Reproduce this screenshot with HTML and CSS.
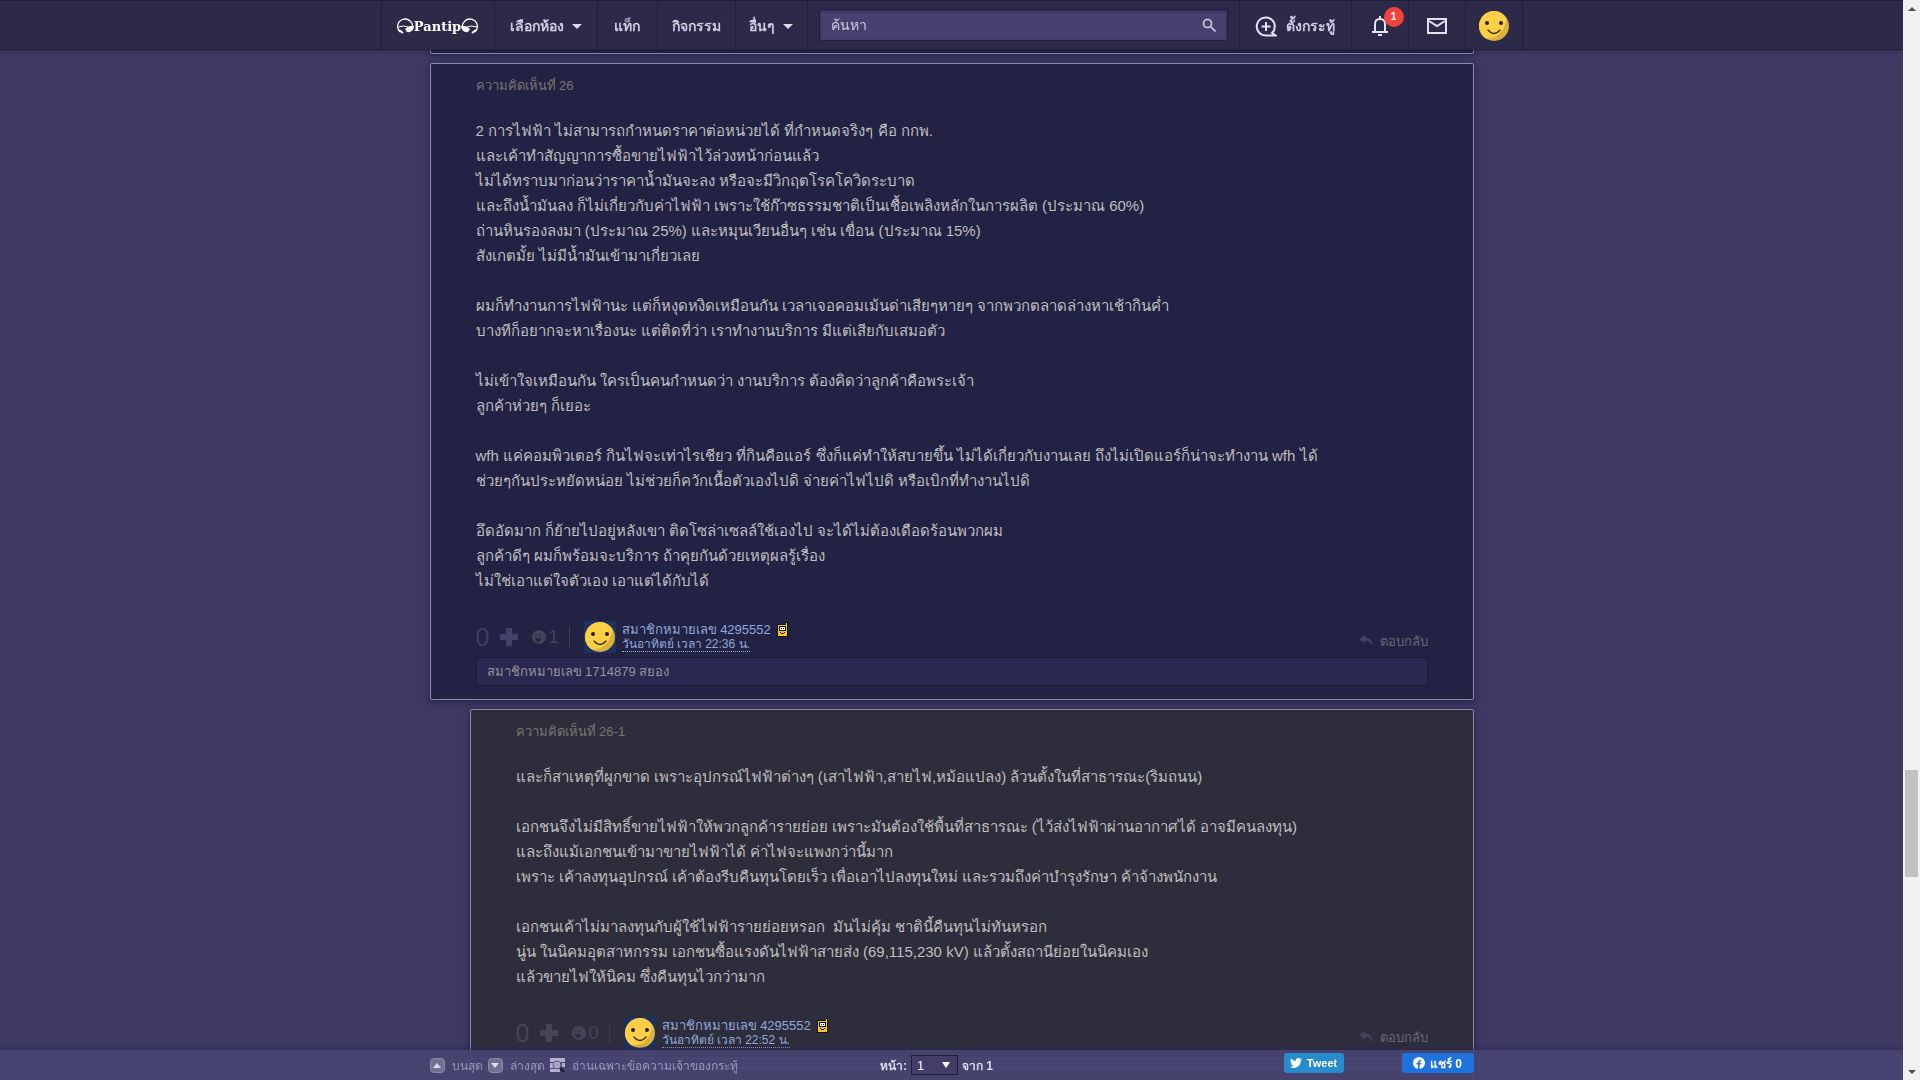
FILE: index.html
```html
<!DOCTYPE html>
<html lang="th">
<head>
  <meta charset="UTF-8">
  <meta name="viewport" content="width=device-width, initial-scale=1.0">
  <title>Pantip</title>
  <link rel="stylesheet" href="styles.css">
</head>
<body>
  <svg class="sprites" aria-hidden="true">
    <symbol id="face" viewBox="0 0 32 32">
      <circle cx="16" cy="16" r="15" fill="#dcb03c"/>
      <path d="M16 1a15 15 0 0 0-9 27c12 2 21-8 21-20A15 15 0 0 0 16 1z" fill="#ffd047"/>
      <ellipse cx="9" cy="13" rx="2" ry="2" fill="#252015"/>
      <ellipse cx="23" cy="13" rx="2" ry="2" fill="#252015"/>
      <path d="M10 20q6 7 12 0" fill="none" stroke="#4a3912" stroke-width="1.4" stroke-linecap="round"/>
    </symbol>
    <symbol id="emotion" viewBox="0 0 14 14">
      <circle cx="7" cy="7" r="7" fill="currentColor"/>
      <path d="M4 4v2M8 4v2" stroke="#242343" stroke-width="1"/>
      <path d="M3 8q3 1 6 0 0 4-3 4-2 0-3-4z" fill="#242343"/>
    </symbol>
    <symbol id="plus" viewBox="0 0 18 18">
      <path d="M6 0h6v6h6v6h-6v6H6v-6H0V6h6z" fill="currentColor"/>
    </symbol>
    <symbol id="reply" viewBox="0 0 14 12">
      <path d="M0 4l6-4v2.500c5 0 8 4 8 9C12 7.500 10 6 6 6v2.500z" fill="currentColor"/>
    </symbol>
    <symbol id="phone" viewBox="0 0 12 16">
      <path d="M0 2h9V0h2v15H0z" fill="#15100a"/>
      <path d="M1 3h9v11H1z" fill="#f6c81c"/>
      <path d="M9 1h1v3H9z" fill="#f6e81c"/>
      <path d="M2 4h7v5H2z" fill="#15100a"/>
      <path d="M3 5h5v3H3z" fill="#fff"/>
      <path d="M4 6h1v1H4zM6 6h1v1H6zM3 10h1v1H3zM7 10h1v1H7zM4 11h3v1H4z" fill="#15100a"/>
    </symbol>
  </svg>

  <header class="topbar">
    <nav class="topbar-inner">
      <a class="logo" href="#">
        <svg width="17" height="17" viewBox="0 0 17 17" fill="none" stroke="#fff">
          <path d="M3 14A7.500 7.500 0 1 1 15.500 10" stroke-width="1.300"/>
          <path d="M1 9q6-2 10 0" stroke-width="1"/>
          <path d="M8 11q4-4 9-3-1 7-7 6z" fill="#fff" stroke="none"/>
          <path d="M2 12l4 3" stroke-width="2"/>
        </svg>
        <span>Pantip</span>
        <svg width="17" height="17" viewBox="0 0 17 17" fill="none" stroke="#fff">
          <path d="M1.500 10A7.500 7.500 0 1 1 14 14" stroke-width="1.300"/>
          <path d="M6 9q4-2 10 0" stroke-width="1"/>
          <path d="M0 8q5-1 9 3l-2 3q-6 1-7-6z" fill="#fff" stroke="none"/>
          <path d="M11 15l4-3" stroke-width="2"/>
        </svg>
      </a>
      <a class="nav-item nav-rooms" href="#">เลือกห้อง <i class="caret"></i></a>
      <a class="nav-item nav-tags" href="#">แท็ก</a>
      <a class="nav-item nav-activity" href="#">กิจกรรม</a>
      <a class="nav-item nav-more" href="#">อื่นๆ <i class="caret"></i></a>
      <form class="search">
        <input type="text" placeholder="ค้นหา" aria-label="ค้นหา">
        <button type="submit" aria-label="ค้นหา">
          <svg width="14" height="14" viewBox="0 0 14 14" fill="none" stroke="#d3cfe3" stroke-width="1.600">
            <circle cx="5.500" cy="5.500" r="4"/><path d="M8.500 8.500l5 5"/>
          </svg>
        </button>
      </form>
      <a class="nav-item nav-post" href="#">
        <svg width="22" height="22" viewBox="0 0 22 22" fill="none" stroke="#e4e1f0" stroke-width="2">
          <path d="M17 18a9 9 0 1 0-6 2.500h9.500z"/><path d="M11 7v9M6.500 11.500h9"/>
        </svg>
        ตั้งกระทู้
      </a>
      <a class="nav-item nav-icon nav-bell" href="#" aria-label="แจ้งเตือน">
        <svg width="18" height="20" viewBox="0 0 18 20" fill="none" stroke="#e4e1f0" stroke-width="2">
          <path d="M1 16h16M4 15V8q0-5 5-5t5 5v7"/><path d="M9 0v3M7 19h4"/>
        </svg>
        <span class="badge">1</span>
      </a>
      <a class="nav-item nav-icon" href="#" aria-label="ข้อความ">
        <svg width="20" height="16" viewBox="0 0 20 16" fill="none" stroke="#e4e1f0" stroke-width="2">
          <path d="M1 1h18v14H1zM2 3l8 5 8-5"/>
        </svg>
      </a>
      <a class="nav-item nav-icon" href="#" aria-label="โปรไฟล์">
        <svg width="32" height="32"><use href="#face"/></svg>
      </a>
    </nav>
  </header>

  <main class="thread">
    <article class="comment comment-prev"></article>

    <article class="comment">
      <h2 class="comment-no">ความคิดเห็นที่ 26</h2>
      <div class="comment-text">2 การไฟฟ้า ไม่สามารถกำหนดราคาต่อหน่วยได้ ที่กำหนดจริงๆ คือ กกพ.<br>
        และเค้าทำสัญญาการซื้อขายไฟฟ้าไว้ล่วงหน้าก่อนแล้ว<br>
        ไม่ได้ทราบมาก่อนว่าราคาน้ำมันจะลง หรือจะมีวิกฤตโรคโควิดระบาด<br>
        และถึงน้ำมันลง ก็ไม่เกี่ยวกับค่าไฟฟ้า เพราะใช้ก๊าซธรรมชาติเป็นเชื้อเพลิงหลักในการผลิต (ประมาณ 60%)<br>
        ถ่านหินรองลงมา (ประมาณ 25%) และหมุนเวียนอื่นๆ เช่น เขื่อน (ประมาณ 15%)<br>
        สังเกตมั้ย ไม่มีน้ำมันเข้ามาเกี่ยวเลย<br>
        <br>
        ผมก็ทำงานการไฟฟ้านะ แต่ก็หงุดหงิดเหมือนกัน เวลาเจอคอมเม้นด่าเสียๆหายๆ จากพวกตลาดล่างหาเช้ากินค่ำ<br>
        บางทีก็อยากจะหาเรื่องนะ แต่ติดที่ว่า เราทำงานบริการ มีแต่เสียกับเสมอตัว<br>
        <br>
        ไม่เข้าใจเหมือนกัน ใครเป็นคนกำหนดว่า งานบริการ ต้องคิดว่าลูกค้าคือพระเจ้า<br>
        ลูกค้าห่วยๆ ก็เยอะ<br>
        <br>
        wfh แค่คอมพิวเตอร์ กินไฟจะเท่าไรเชียว ที่กินคือแอร์ ซึ่งก็แค่ทำให้สบายขึ้น ไม่ได้เกี่ยวกับงานเลย ถึงไม่เปิดแอร์ก็น่าจะทำงาน wfh ได้<br>
        ช่วยๆกันประหยัดหน่อย ไม่ช่วยก็ควักเนื้อตัวเองไปดิ จ่ายค่าไฟไปดิ หรือเบิกที่ทำงานไปดิ<br>
        <br>
        อึดอัดมาก ก็ย้ายไปอยู่หลังเขา ติดโซล่าเซลล์ใช้เองไป จะได้ไม่ต้องเดือดร้อนพวกผม<br>
        ลูกค้าดีๆ ผมก็พร้อมจะบริการ ถ้าคุยกันด้วยเหตุผลรู้เรื่อง<br>
        ไม่ใช่เอาแต่ใจตัวเอง เอาแต่ได้กับได้</div>
      <div class="comment-foot">
        <span class="score">0</span>
        <button class="vote" aria-label="โหวต"><svg width="18" height="18"><use href="#plus"/></svg></button>
        <button class="emotion"><svg width="14" height="14"><use href="#emotion"/></svg>1</button>
        <svg class="avatar" width="32" height="32"><use href="#face"/></svg>
        <div class="author">
          <a class="author-name" href="#">สมาชิกหมายเลข 4295552</a>
          <svg class="mobile" width="12" height="16"><use href="#phone"/></svg>
          <a class="author-time" href="#">วันอาทิตย์ เวลา 22:36 น.</a>
        </div>
        <a class="reply" href="#"><svg width="14" height="12"><use href="#reply"/></svg>ตอบกลับ</a>
      </div>
      <p class="reacted">สมาชิกหมายเลข 1714879 สยอง</p>
    </article>

    <article class="comment comment-sub">
      <h2 class="comment-no">ความคิดเห็นที่ 26-1</h2>
      <div class="comment-text">และก็สาเหตุที่ผูกขาด เพราะอุปกรณ์ไฟฟ้าต่างๆ (เสาไฟฟ้า,สายไฟ,หม้อแปลง) ล้วนตั้งในที่สาธารณะ(ริมถนน)<br>
        <br>
        เอกชนจึงไม่มีสิทธิ์ขายไฟฟ้าให้พวกลูกค้ารายย่อย เพราะมันต้องใช้พื้นที่สาธารณะ (ไว้ส่งไฟฟ้าผ่านอากาศได้ อาจมีคนลงทุน)<br>
        และถึงแม้เอกชนเข้ามาขายไฟฟ้าได้ ค่าไฟจะแพงกว่านี้มาก<br>
        เพราะ เค้าลงทุนอุปกรณ์ เค้าต้องรีบคืนทุนโดยเร็ว เพื่อเอาไปลงทุนใหม่ และรวมถึงค่าบำรุงรักษา ค้าจ้างพนักงาน<br>
        <br>
        เอกชนเค้าไม่มาลงทุนกับผู้ใช้ไฟฟ้ารายย่อยหรอก &nbsp;มันไม่คุ้ม ชาตินี้คืนทุนไม่ทันหรอก<br>
        นู่น ในนิคมอุตสาหกรรม เอกชนซื้อแรงดันไฟฟ้าสายส่ง (69,115,230 kV) แล้วตั้งสถานีย่อยในนิคมเอง<br>
        แล้วขายไฟให้นิคม ซึ่งคืนทุนไวกว่ามาก</div>
      <div class="comment-foot">
        <span class="score">0</span>
        <button class="vote" aria-label="โหวต"><svg width="18" height="18"><use href="#plus"/></svg></button>
        <button class="emotion"><svg width="14" height="14"><use href="#emotion"/></svg>0</button>
        <svg class="avatar" width="32" height="32"><use href="#face"/></svg>
        <div class="author">
          <a class="author-name" href="#">สมาชิกหมายเลข 4295552</a>
          <svg class="mobile" width="12" height="16"><use href="#phone"/></svg>
          <a class="author-time" href="#">วันอาทิตย์ เวลา 22:52 น.</a>
        </div>
        <a class="reply" href="#"><svg width="14" height="12"><use href="#reply"/></svg>ตอบกลับ</a>
      </div>
    </article>

    <article class="comment comment-sub"></article>
  </main>

  <footer class="bottombar">
    <div class="bottombar-inner">
      <div class="jump">
        <a href="#"><i class="jump-btn"><svg width="8" height="5" viewBox="0 0 8 5"><path d="M0 5l4-5 4 5z" fill="#dedbe9"/></svg></i>บนสุด</a>
        <a href="#"><i class="jump-btn"><svg width="8" height="5" viewBox="0 0 8 5"><path d="M0 0l4 5 4-5z" fill="#dedbe9"/></svg></i>ล่างสุด</a>
        <a href="#">
          <svg class="jump-owner" width="15" height="16" viewBox="0 0 15 16">
            <path d="M0 1h15v4H0zM0 6h3v5H0zM0 12h10v3H0zM12 6h3v4h-3z" fill="#b5b0cf"/>
            <circle cx="7" cy="8" r="4" fill="#aaa6c6" stroke="#625d86"/>
            <path d="M10 11l4 4" stroke="#191629" stroke-width="2"/>
          </svg>อ่านเฉพาะข้อความเจ้าของกระทู้</a>
      </div>
      <div class="pager">
        <label for="page">หน้า:</label>
        <span class="select-wrap"><select id="page"><option>1</option></select></span>
        <span>จาก 1</span>
      </div>
      <div class="share">
        <button class="tweet">
          <svg width="12" height="10" viewBox="0 0 24 20"><path d="M24 2.500a10 10 0 0 1-2.800.8A5 5 0 0 0 23.300.5a10 10 0 0 1-3.100 1.200 4.900 4.900 0 0 0-8.400 4.500A14 14 0 0 1 1.700 1a4.900 4.900 0 0 0 1.500 6.600A4.900 4.900 0 0 1 1 7a4.900 4.900 0 0 0 3.900 4.900 5 5 0 0 1-2.200 0 4.900 4.900 0 0 0 4.600 3.500A9.900 9.900 0 0 1 0 17.500 14 14 0 0 0 21.500 5 10 10 0 0 0 24 2.500z" fill="#fff"/></svg>Tweet</button>
        <button class="facebook">
          <svg width="12" height="12" viewBox="0 0 12 12"><circle cx="6" cy="6" r="6" fill="#fff"/><path d="M5 12V7.500H3.500V6H5V5q0-2.500 3.200-2v1.200q-1.600-.2-1.600.9V6h1.600L8 7.500H6.600V12z" fill="#1e72dd"/></svg>แชร์ 0</button>
      </div>
    </div>
  </footer>

  <div class="scrollbar" aria-hidden="true">
    <i class="scroll-up"></i>
    <i class="scroll-thumb"></i>
    <i class="scroll-down"></i>
  </div>
</body>
</html>
```
FILE: styles.css
```css
* {
  box-sizing: border-box;
}

body {
  margin: 0;
  padding-right: 17px;
  height: 100vh;
  overflow: hidden;
  background-color: #3d3963;
  color: #bfbfbf;
  font-family: "Liberation Sans", Arial, sans-serif;
  font-size: 13px;
}

a {
  color: inherit;
  text-decoration: none;
}

button {
  border: 0;
  padding: 0;
  background: none;
  color: inherit;
  font-family: inherit;
  cursor: pointer;
}

.sprites {
  display: none;
}

/* top bar */
.topbar {
  position: fixed;
  top: 0;
  left: 0;
  right: 17px;
  z-index: 10;
  height: 50px;
  background-color: #2d2a49;
  border-top: 1px solid #211e38;
  border-bottom: 1px solid #211e38;
  box-shadow: 0 1px 4px rgba(20, 16, 45, 0.4);
}

.topbar-inner {
  display: flex;
  height: 100%;
  max-width: 1142px;
  margin: 0 auto;
  border-left: 1px solid #211e38;
  color: #cfcbe1;
  font-size: 14px;
  font-weight: bold;
}

.logo,
.nav-item {
  display: flex;
  align-items: center;
  justify-content: center;
  padding-top: 2px;
  border-right: 1px solid #211e38;
}

.logo {
  width: 113px;
  color: #fff;
  font-family: "DejaVu Serif", serif;
  font-size: 13px;
}

.caret {
  margin-left: 8px;
  border: 5px solid transparent;
  border-top-color: #dedbec;
  border-bottom: 0;
}

.nav-rooms {
  width: 103px;
}

.nav-tags {
  width: 60px;
}

.nav-activity {
  width: 78px;
}

.nav-more {
  width: 72px;
}

.search {
  flex: 1;
  display: flex;
  align-items: center;
  margin: 8px 11px;
  padding: 0 11px;
  background-color: #46416f;
  border: 1px solid #211e38;
  border-radius: 2px;
  box-shadow: inset 0 1px 3px rgba(30, 25, 60, 0.6);
}

.search input {
  flex: 1;
  min-width: 0;
  padding: 0;
  border: 0;
  outline: none;
  background: none;
  color: inherit;
  font-family: inherit;
  font-size: 14px;
}

.search input::placeholder {
  color: #cfcbe1;
  opacity: 1;
}

.search button {
  display: flex;
}

.nav-post {
  width: 113px;
  gap: 9px;
  border-left: 1px solid #211e38;
}

.nav-icon {
  position: relative;
  width: 57px;
}

.badge {
  position: absolute;
  top: 6px;
  left: 32px;
  width: 20px;
  height: 20px;
  border-radius: 50%;
  background-color: #f4433c;
  color: #fff;
  font-size: 10px;
  line-height: 20px;
  text-align: center;
}

/* comments */
.thread {
  max-width: 1044px;
  margin: 0 auto;
}

.comment {
  margin-bottom: 9px;
  padding: 9px 45px;
  min-height: 54px;
  background-color: #222244;
  border: 1px solid #8e8ba9;
  border-radius: 2px;
  box-shadow: 0 2px 6px rgba(25, 18, 55, 0.6);
}

.comment-sub {
  margin-left: 40px;
  background-color: #2e2d3c;
}

.comment-no {
  margin: 0 0 20px;
  color: #7a766f;
  font-size: 13px;
  font-weight: normal;
  line-height: 25px;
}

.comment-text {
  margin-bottom: 28px;
  font-size: 15px;
  line-height: 25px;
}

.comment-foot {
  display: flex;
  align-items: center;
  height: 32px;
  color: #46415e;
}

.comment .score {
  width: 18px;
  color: #413a6b;
  font-size: 25px;
}

.vote {
  display: flex;
  align-items: center;
  justify-content: center;
  width: 30px;
  height: 28px;
  border: 1px solid #26243f;
  border-radius: 4px;
  color: #45406a;
}

.emotion {
  display: flex;
  align-items: center;
  gap: 3px;
  height: 22px;
  margin-left: 8px;
  padding-right: 10px;
  border-right: 1px solid #3f3e45;
  color: #464359;
  font-size: 18px;
}

.comment-sub .score,
.comment-sub .vote {
  color: #484456;
}

.comment-sub .vote {
  border-color: #34313f;
}

.avatar {
  margin-left: 14px;
  background-color: #1b3260;
}

.author {
  display: grid;
  grid-template-columns: auto auto;
  align-items: center;
  column-gap: 6px;
  margin-left: 6px;
  color: #8fa8dc;
  line-height: 16px;
}

.author-time {
  justify-self: start;
  font-size: 12px;
  line-height: 13px;
  border-bottom: 1px dotted #8fa8dc;
}

.reply {
  display: flex;
  align-items: center;
  gap: 7px;
  margin-left: auto;
  margin-top: 8px;
  color: #6a6775;
}

.reply svg {
  color: #464162;
}

.reacted {
  margin: 4px 0;
  padding: 0 10px;
  border: 1px solid #1a1936;
  background-color: #2a2850;
  color: #96939b;
  line-height: 27px;
}

/* bottom bar, slightly see-through */
.bottombar {
  position: fixed;
  left: 0;
  right: 17px;
  bottom: 0;
  z-index: 10;
  height: 30px;
  background-color: rgba(72, 68, 114, 0.93);
  box-shadow: 0 -1px 4px rgba(45, 38, 90, 0.8);
  color: #dedbe9;
}

.bottombar-inner {
  display: grid;
  grid-template-columns: 1fr auto 1fr;
  align-items: center;
  height: 100%;
  max-width: 1044px;
  margin: 0 auto;
}

.jump {
  display: flex;
  gap: 5px;
  color: #9b96b8;
  font-size: 12px;
}

.jump a {
  display: flex;
  align-items: center;
  gap: 7px;
}

.jump-btn {
  display: flex;
  align-items: center;
  justify-content: center;
  width: 15px;
  height: 15px;
  border: 1px solid #8a86a8;
  border-radius: 4px;
  background-color: #736f91;
}

.pager {
  display: flex;
  align-items: center;
  gap: 4px;
  padding-right: 30px;
  font-weight: bold;
  font-size: 12px;
}

.select-wrap {
  display: flex;
  align-items: center;
}

.select-wrap::after {
  content: "";
  width: 0;
  margin-left: -16px;
  margin-right: 8px;
  border: 4px solid transparent;
  border-top: 6px solid #fff;
  border-bottom: 0;
  pointer-events: none;
}

.pager select {
  appearance: none;
  width: 47px;
  height: 20px;
  padding: 0 5px;
  border: 1px solid #211e38;
  border-radius: 0;
  background-color: #423d69;
  color: #fff;
  font-family: inherit;
  font-size: 13px;
}

.share {
  display: flex;
  justify-content: flex-end;
  gap: 58px;
}

.share button {
  display: flex;
  align-items: center;
  justify-content: center;
  gap: 5px;
  height: 20px;
  margin-bottom: 4px;
  border-radius: 3px;
  color: #fff;
  font-weight: bold;
}

.share .tweet {
  width: 60px;
  background-color: #268ccd;
  font-size: 11px;
}

.share .facebook {
  width: 72px;
  background-color: #1e72dd;
  font-size: 12px;
}

/* page scrollbar */
.scrollbar {
  position: fixed;
  top: 0;
  right: 0;
  bottom: 0;
  z-index: 20;
  display: grid;
  grid-template-rows: 17px 753fr 107px 186fr 17px;
  justify-items: center;
  align-items: center;
  width: 17px;
  background-color: #f1f1f1;
}

.scroll-up {
  border: 4px solid transparent;
  border-bottom-color: #505050;
  border-top: 0;
}

.scroll-thumb {
  grid-row: 3;
  width: 13px;
  height: 100%;
  background-color: #c1c1c1;
}

.scroll-down {
  grid-row: 5;
  border: 4px solid transparent;
  border-top-color: #505050;
  border-bottom: 0;
}
```
